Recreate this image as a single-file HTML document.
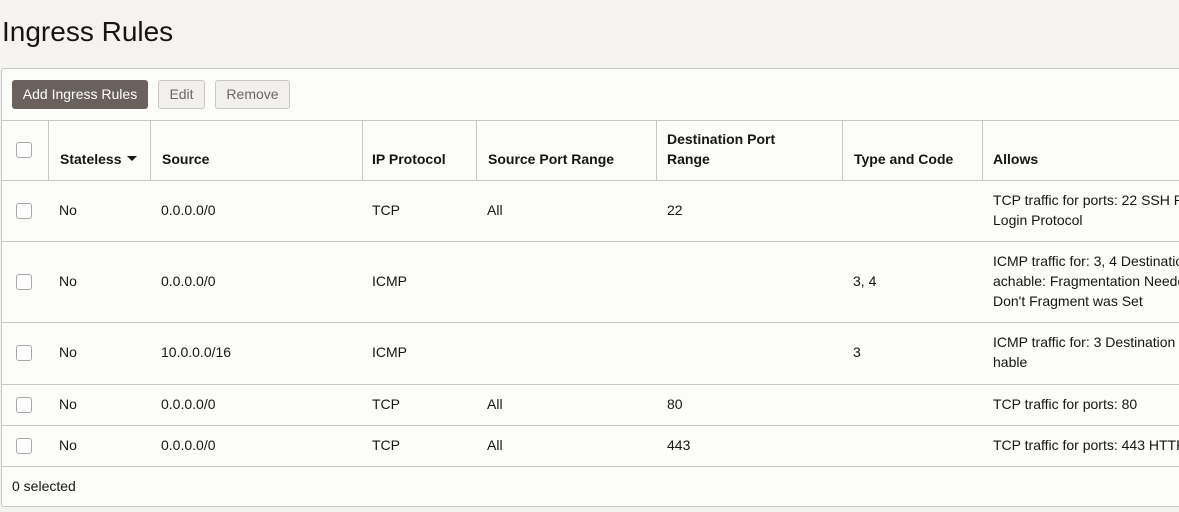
<!DOCTYPE html>
<html><head><style>
*{margin:0;padding:0;box-sizing:border-box}
body{width:1179px;height:512px;background:#f4f3f2;font-family:"Liberation Sans",Arial,sans-serif;color:#161513;overflow:hidden;position:relative;font-size:14px}
h1{position:absolute;left:2px;top:16px;font-size:28px;font-weight:normal;color:#161513}
.panel{position:absolute;left:1px;top:68px;width:1190px;height:439px;background:#fcfcfb;border:1px solid #c9c7c4;border-radius:3px;overflow:hidden}
.w{position:absolute;left:-1px;top:0;width:1200px;height:439px}
.btn{position:absolute;top:11px;height:29px;line-height:27px;font-size:14px;border-radius:3px;text-align:center}
.hl{position:absolute;left:0;width:1200px;height:1px;background:#c9c7c4}
.vl{position:absolute;top:51px;height:61px;width:1px;background:#c9c7c4}
.t{position:absolute;white-space:nowrap;line-height:20px}
.h{font-weight:bold}
.cb{position:absolute;left:15px;width:16px;height:16px;border:1px solid #aaa8a5;border-radius:3px;background:#fff}
</style></head><body>
<h1>Ingress Rules</h1>
<div class="panel"><div class="w">
<div class="btn" style="left:11px;width:136px;background:#6b615c;color:#fff;border:1px solid #6b615c">Add Ingress Rules</div>
<div class="btn" style="left:157px;width:47px;background:#f1f0ef;color:#6a6764;border:1px solid #c9c7c4">Edit</div>
<div class="btn" style="left:214px;width:75px;background:#f1f0ef;color:#6a6764;border:1px solid #c9c7c4">Remove</div>
<div class="hl" style="top:51px"></div>
<div class="hl" style="top:111px"></div>
<div class="hl" style="top:172px"></div>
<div class="hl" style="top:253px"></div>
<div class="hl" style="top:315px"></div>
<div class="hl" style="top:356px"></div>
<div class="hl" style="top:397px"></div>
<div class="vl" style="left:47px"></div>
<div class="vl" style="left:149px"></div>
<div class="vl" style="left:361px"></div>
<div class="vl" style="left:475px"></div>
<div class="vl" style="left:655px"></div>
<div class="vl" style="left:841px"></div>
<div class="vl" style="left:981px"></div>
<div class="cb" style="top:73px"></div>
<div class="t h" style="left:59px;top:80px">Stateless <span style="display:inline-block;width:0;height:0;border-left:5px solid transparent;border-right:5px solid transparent;border-top:5px solid #161513;vertical-align:3px;margin-left:2px"></span></div>
<div class="t h" style="left:161px;top:80px">Source</div>
<div class="t h" style="left:371px;top:80px">IP Protocol</div>
<div class="t h" style="left:487px;top:80px">Source Port Range</div>
<div class="t h" style="left:666px;top:60px">Destination Port<br>Range</div>
<div class="t h" style="left:853px;top:80px">Type and Code</div>
<div class="t h" style="left:992px;top:80px">Allows</div>

<div class="cb" style="top:134px"></div>
<div class="t" style="left:58px;top:131px">No</div>
<div class="t" style="left:160px;top:131px">0.0.0.0/0</div>
<div class="t" style="left:371px;top:131px">TCP</div>
<div class="t" style="left:486px;top:131px">All</div>
<div class="t" style="left:666px;top:131px">22</div>
<div class="t" style="left:992px;top:121px">TCP traffic for ports: 22 SSH Remote<br>Login Protocol</div>

<div class="cb" style="top:205px"></div>
<div class="t" style="left:58px;top:202px">No</div>
<div class="t" style="left:160px;top:202px">0.0.0.0/0</div>
<div class="t" style="left:371px;top:202px">ICMP</div>
<div class="t" style="left:852px;top:202px">3, 4</div>
<div class="t" style="left:992px;top:182px">ICMP traffic for: 3, 4 Destination Unre<br>achable: Fragmentation Needed and<br>Don't Fragment was Set</div>

<div class="cb" style="top:276px"></div>
<div class="t" style="left:58px;top:273px">No</div>
<div class="t" style="left:160px;top:273px">10.0.0.0/16</div>
<div class="t" style="left:371px;top:273px">ICMP</div>
<div class="t" style="left:852px;top:273px">3</div>
<div class="t" style="left:992px;top:263px">ICMP traffic for: 3 Destination Unreac<br>hable</div>

<div class="cb" style="top:328px"></div>
<div class="t" style="left:58px;top:325px">No</div>
<div class="t" style="left:160px;top:325px">0.0.0.0/0</div>
<div class="t" style="left:371px;top:325px">TCP</div>
<div class="t" style="left:486px;top:325px">All</div>
<div class="t" style="left:666px;top:325px">80</div>
<div class="t" style="left:992px;top:325px">TCP traffic for ports: 80</div>

<div class="cb" style="top:369px"></div>
<div class="t" style="left:58px;top:366px">No</div>
<div class="t" style="left:160px;top:366px">0.0.0.0/0</div>
<div class="t" style="left:371px;top:366px">TCP</div>
<div class="t" style="left:486px;top:366px">All</div>
<div class="t" style="left:666px;top:366px">443</div>
<div class="t" style="left:992px;top:366px">TCP traffic for ports: 443 HTTPS</div>

<div class="t" style="left:11px;top:407px">0 selected</div>
</div></div>
</body></html>
